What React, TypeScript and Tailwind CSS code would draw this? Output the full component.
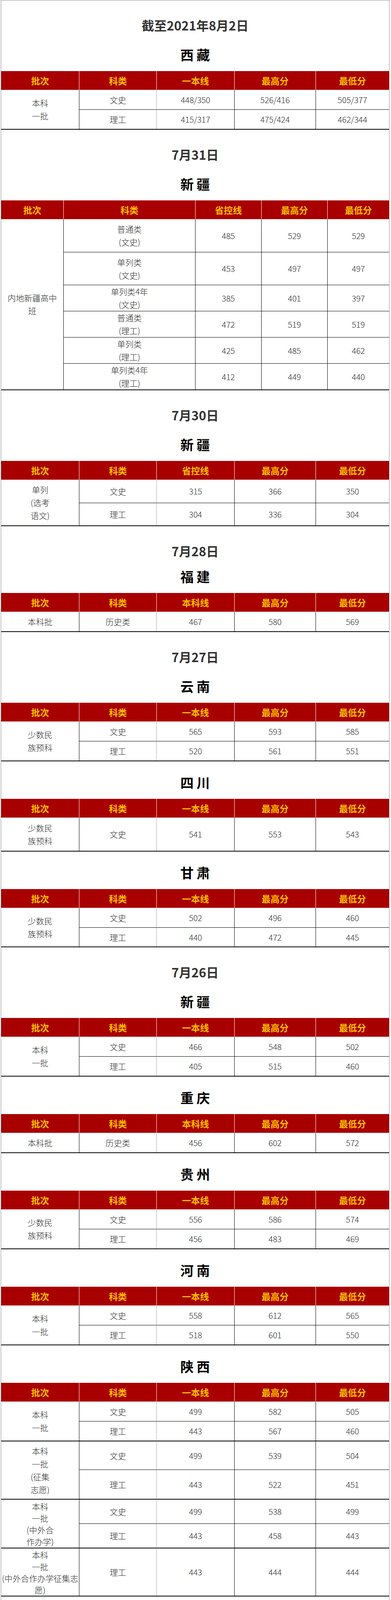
import clsx from "clsx";

type Cell = { t: string; rs?: number; lh?: string };
type Row = { h: number; cells: Cell[]; thick?: boolean };
type Table = { cols: number[]; head: string[]; rows: Row[]; blackMid?: boolean };
type Section = { date?: string; tight?: boolean; province: string; table: Table };

// column widths (px) of the two table layouts
const STD = [199, 198, 199, 208, 188];
const WIDE = [159, 337, 169, 169, 158];

const HEAD_YB = ["批次", "科类", "一本线", "最高分", "最低分"];
const HEAD_SK = ["批次", "科类", "省控线", "最高分", "最低分"];
const HEAD_BK = ["批次", "科类", "本科线", "最高分", "最低分"];

// two rows sharing one 批次 cell
const pair = (label: string, a: string[], b: string[], h1 = 50, h2 = 50, thick = false): Row[] => [
  { h: h1, thick, cells: [{ t: label, rs: 2 }, ...a.map((t) => ({ t }))] },
  { h: h2, cells: b.map((t) => ({ t })) },
];

const single = (cells: string[], h = 50): Row[] => [{ h, cells: cells.map((t) => ({ t })) }];

const sections: Section[] = [
  {
    date: "截至2021年8月2日",
    province: "西 藏",
    table: {
      cols: STD,
      head: HEAD_YB,
      rows: pair("本科\n一批", ["文史", "448/350", "526/416", "505/377"], ["理工", "415/317", "475/424", "462/344"]),
    },
  },
  {
    date: "7月31日",
    province: "新 疆",
    table: {
      cols: WIDE,
      head: HEAD_SK,
      blackMid: true,
      rows: [
        { h: 84, cells: [{ t: "内地新疆高中\n班", rs: 6 }, { t: "普通类\n(文史)" }, { t: "485" }, { t: "529" }, { t: "529" }] },
        { h: 84, cells: [{ t: "单列类\n(文史)" }, { t: "453" }, { t: "497" }, { t: "497" }] },
        { h: 67, cells: [{ t: "单列类4年\n(文史)" }, { t: "385" }, { t: "401" }, { t: "397" }] },
        { h: 67, cells: [{ t: "普通类\n(理工)" }, { t: "472" }, { t: "519" }, { t: "519" }] },
        { h: 67, cells: [{ t: "单列类\n(理工)" }, { t: "425" }, { t: "485" }, { t: "462" }] },
        { h: 67, cells: [{ t: "单列类4年\n(理工)" }, { t: "412" }, { t: "449" }, { t: "440" }] },
      ],
    },
  },
  {
    date: "7月30日",
    province: "新 疆",
    table: {
      cols: STD,
      head: HEAD_SK,
      rows: pair("单列\n(选考\n语文)", ["文史", "315", "366", "350"], ["理工", "304", "336", "304"], 59, 58),
    },
  },
  {
    date: "7月28日",
    tight: true,
    province: "福 建",
    table: { cols: STD, head: HEAD_BK, rows: single(["本科批", "历史类", "467", "580", "569"]) },
  },
  {
    date: "7月27日",
    province: "云 南",
    table: {
      cols: STD,
      head: HEAD_YB,
      rows: pair("少数民\n族预科", ["文史", "565", "593", "585"], ["理工", "520", "561", "551"]),
    },
  },
  {
    province: "四 川",
    table: { cols: STD, head: HEAD_YB, rows: single(["少数民\n族预科", "文史", "541", "553", "543"], 85) },
  },
  {
    province: "甘 肃",
    table: {
      cols: STD,
      head: HEAD_YB,
      rows: pair("少数民\n族预科", ["文史", "502", "496", "460"], ["理工", "440", "472", "445"], 50, 49),
    },
  },
  {
    date: "7月26日",
    province: "新 疆",
    table: {
      cols: STD,
      head: HEAD_YB,
      rows: pair("本科\n一批", ["文史", "466", "548", "502"], ["理工", "405", "515", "460"]),
    },
  },
  {
    province: "重 庆",
    table: { cols: STD, head: HEAD_BK, rows: single(["本科批", "历史类", "456", "602", "572"]) },
  },
  {
    province: "贵 州",
    table: {
      cols: STD,
      head: HEAD_YB,
      rows: pair("少数民\n族预科", ["文史", "556", "586", "574"], ["理工", "456", "483", "469"]),
    },
  },
  {
    province: "河 南",
    table: {
      cols: STD,
      head: HEAD_YB,
      rows: pair("本科\n一批", ["文史", "558", "612", "565"], ["理工", "518", "601", "550"]),
    },
  },
  {
    province: "陕 西",
    table: {
      cols: STD,
      head: HEAD_YB,
      rows: [
        ...pair("本科\n一批", ["文史", "499", "582", "505"], ["理工", "443", "567", "460"]),
        ...pair("本科\n一批\n(征集\n志愿)", ["文史", "499", "539", "504"], ["理工", "443", "522", "451"], 74, 75, true),
        {
          h: 63,
          thick: true,
          cells: [{ t: "本科\n一批\n(中外合\n作办学)", rs: 2, lh: "leading-[30px]" }, { t: "文史" }, { t: "499" }, { t: "538" }, { t: "499" }],
        },
        { h: 62, cells: [{ t: "理工" }, { t: "443" }, { t: "458" }, { t: "443" }] },
        {
          h: 123,
          thick: true,
          cells: [
            { t: "本科\n一批\n(中外合作办学征集志\n愿)", lh: "leading-[30px]" },
            { t: "理工" },
            { t: "443" },
            { t: "444" },
            { t: "444" },
          ],
        },
      ],
    },
  },
];

function ScoreTable({ table }: { table: Table }) {
  const n = table.cols.length;
  return (
    <table className="w-full table-fixed border-separate border-spacing-0">
      <colgroup>
        {table.cols.map((w, i) => (
          <col key={i} style={{ width: w }} />
        ))}
      </colgroup>
      <thead>
        <tr className="h-[48px]">
          {table.head.map((h, i) => (
            <th
              key={h}
              className={clsx(
                "bg-[#a80000] p-0 text-center text-[23px] font-bold text-[#ffc000]",
                i > 0 && "border-l border-white"
              )}
            >
              {h}
            </th>
          ))}
        </tr>
      </thead>
      <tbody>
        {table.rows.map((row, r) => {
          const offset = n - row.cells.length;
          return (
            <tr key={r} style={{ height: row.h }}>
              {row.cells.map((c, j) => {
                const col = offset + j;
                return (
                  <td
                    key={j}
                    rowSpan={c.rs}
                    className={clsx(
                      "p-0 text-center align-middle text-[21px] font-light text-[#2b2b2b]",
                      c.lh ?? "leading-[33px]",
                      r > 0 && (row.thick ? "border-t-2 border-t-black" : "border-t border-t-black"),
                      col > 0 && "border-l",
                      col > 0 && (col === 2 && !table.blackMid ? "border-l-[#a6a6a6]" : "border-l-black")
                    )}
                  >
                    {c.t.split("\n").map((line, k) => (
                      <div key={k} className="whitespace-nowrap">
                        {line}
                      </div>
                    ))}
                  </td>
                );
              })}
            </tr>
          );
        })}
      </tbody>
    </table>
  );
}

export default function App() {
  return (
    <div className="bg-white font-['Noto_Sans_CJK_SC',sans-serif]">
      <div className="ml-[2px] h-[4096px] w-[994px] border-x border-t border-[#8c8c8c]">
        {sections.map((s, i) => (
          <section key={i} className="border-b-2 border-black">
            {s.date && (
              <h2 className="pt-[46px] text-center text-[32px] leading-[34px] font-bold text-[#333]">{s.date}</h2>
            )}
            <h3
              className={clsx(
                "mb-[23px] text-center text-[34px] leading-[38px] font-bold text-black",
                s.date ? (s.tight ? "mt-[30px]" : "mt-[40px]") : "pt-[35px]"
              )}
            >
              {s.province}
            </h3>
            <ScoreTable table={s.table} />
          </section>
        ))}
      </div>
    </div>
  );
}
